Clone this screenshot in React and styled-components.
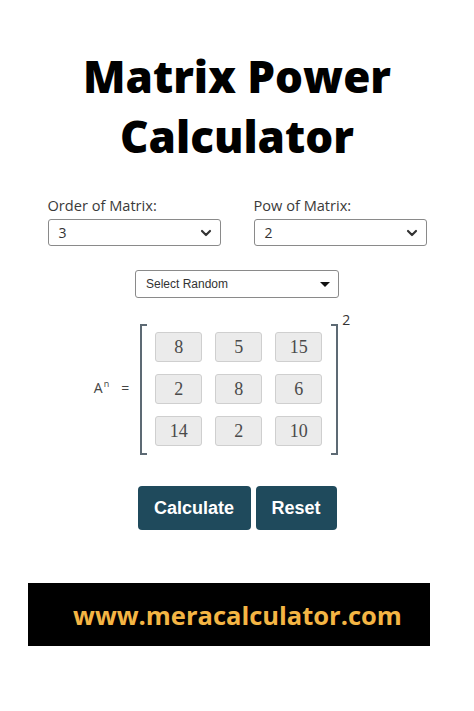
import React from "react";
import styled, { createGlobalStyle } from "styled-components";
import { ChevronDown } from "lucide-react";

const GlobalStyle = createGlobalStyle`
  body {
    margin: 0;
    background: #fff;
    font-family: "Open Sans", sans-serif;
  }
`;

const Page = styled.div`
  width: 474px;
  height: 711px;
  display: flex;
  flex-direction: column;
  align-items: center;
  overflow: hidden;
`;

const Title = styled.h1`
  margin: 46px 0 0;
  font-family: "Open Sans", sans-serif;
  font-weight: 800;
  font-size: 44px;
  line-height: 60px;
  text-align: center;
  color: #000;
`;

const FieldRow = styled.div`
  margin-top: 30px;
  display: flex;
  justify-content: center;
  gap: 33px;
`;

const Field = styled.div`
  display: flex;
  flex-direction: column;
  width: 173px;
`;

const Label = styled.label`
  font-size: 14.6px;
  line-height: 18px;
  color: #3a3a3a;
  margin-bottom: 5px;
`;

const SelectBox = styled.div`
  box-sizing: border-box;
  height: ${(p) => p.$h || 27}px;
  width: ${(p) => (p.$w ? `${p.$w}px` : "100%")};
  border: 1px solid #8a8a8a;
  border-radius: 3px;
  display: flex;
  align-items: center;
  justify-content: space-between;
  padding: 0 6px 0 10px;
  color: #333;
  font-size: ${(p) => p.$fs || 14}px;
  font-family: ${(p) => p.$font || '"Open Sans", sans-serif'};
`;

const Caret = styled.span`
  width: 0;
  height: 0;
  border-left: 5px solid transparent;
  border-right: 5px solid transparent;
  border-top: 5px solid #111;
  margin-right: 2px;
`;

const RandomRow = styled.div`
  margin-top: 24px;
`;

const MatrixRow = styled.div`
  margin-top: 12px;
  display: flex;
  align-items: center;
  margin-left: -30px;
`;

const Lhs = styled.div`
  font-family: "Open Sans", sans-serif;
  font-size: 14px;
  color: #444;
  margin-right: 11px;
  margin-top: 8px;
  sup {
    font-size: 9px;
    margin-left: 1px;
    margin-right: 12px;
  }
`;

const BracketWrap = styled.div`
  display: flex;
  align-items: flex-start;
`;

const Brackets = styled.div`
  position: relative;
  margin-top: 14px;
  padding: 8px 16px 9px 15px;
  &::before,
  &::after {
    content: "";
    position: absolute;
    top: 0;
    bottom: 0;
    width: 5px;
    border: 2px solid #5d6a74;
  }
  &::before {
    left: 0;
    border-right: none;
  }
  &::after {
    right: 0;
    border-left: none;
  }
`;

const Power = styled.span`
  font-size: 14px;
  color: #333;
  margin-left: 4px;
  line-height: 16px;
  margin-top: 2px;
`;

const Grid = styled.div`
  display: grid;
  grid-template-columns: repeat(3, 47px);
  grid-auto-rows: 30px;
  column-gap: 13px;
  row-gap: 12px;
`;

const Cell = styled.div`
  box-sizing: border-box;
  background: #ebebeb;
  border: 1px solid #cfcfcf;
  border-radius: 3px;
  display: flex;
  align-items: center;
  justify-content: center;
  font-family: "Liberation Serif", serif;
  font-size: 18px;
  color: #4a4a4a;
`;

const ButtonRow = styled.div`
  margin-top: 31px;
  display: flex;
  gap: 5px;
`;

const Button = styled.button`
  height: 44px;
  width: ${(p) => p.$w}px;
  background: #1f4a5c;
  color: #fff;
  border: none;
  border-radius: 4px;
  font-family: "Liberation Sans", Arial, sans-serif;
  font-weight: 700;
  font-size: 18px;
  padding: 0;
`;

const Footer = styled.div`
  margin-top: 53px;
  margin-right: 16px;
  width: 402px;
  height: 63px;
  background: #000;
  display: flex;
  align-items: center;
  justify-content: center;
  font-family: "Open Sans", sans-serif;
  font-weight: 700;
  font-size: 25.5px;
  color: #f4b544;
  padding-left: 17px;
  box-sizing: border-box;
`;

const values = [8, 5, 15, 2, 8, 6, 14, 2, 10];

export default function App() {
  return (
    <>
      <GlobalStyle />
      <Page>
        <Title>
          Matrix Power
          <br />
          Calculator
        </Title>
        <FieldRow>
          <Field>
            <Label>Order of Matrix:</Label>
            <SelectBox>
              3
              <ChevronDown size={16} strokeWidth={3.2} color="#333" />
            </SelectBox>
          </Field>
          <Field>
            <Label>Pow of Matrix:</Label>
            <SelectBox>
              2
              <ChevronDown size={16} strokeWidth={3.2} color="#333" />
            </SelectBox>
          </Field>
        </FieldRow>
        <RandomRow>
          <SelectBox $w={204} $h={28} $fs={12} $font='"Liberation Sans", Arial, sans-serif'>
            Select Random
            <Caret />
          </SelectBox>
        </RandomRow>
        <MatrixRow>
          <Lhs>
            A<sup>n</sup>=
          </Lhs>
          <BracketWrap>
            <Brackets>
              <Grid>
                {values.map((v, i) => (
                  <Cell key={i}>{v}</Cell>
                ))}
              </Grid>
            </Brackets>
            <Power>2</Power>
          </BracketWrap>
        </MatrixRow>
        <ButtonRow>
          <Button $w={113}>Calculate</Button>
          <Button $w={81}>Reset</Button>
        </ButtonRow>
        <Footer>www.meracalculator.com</Footer>
      </Page>
    </>
  );
}
